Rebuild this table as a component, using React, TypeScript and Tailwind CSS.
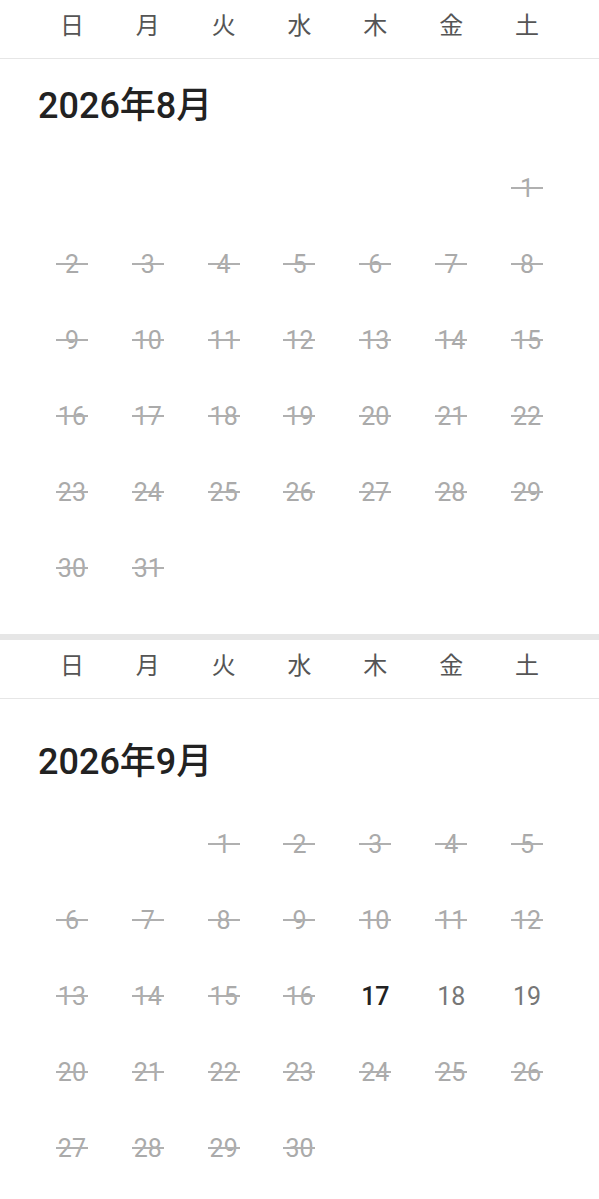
import React from "react";

const WEEK = ["日", "月", "火", "水", "木", "金", "土"];

type Day = { n: number; state: "past" | "today" | "open" };

const font = { fontFamily: 'Roboto, "Noto Sans CJK JP", sans-serif' };

const WeekHeader = () => (
  <div className="grid grid-cols-7 px-[34px] h-[59px] pb-[6px] items-center border-b border-[#e6e6e6]">
    {WEEK.map((w) => (
      <div key={w} className="text-center text-[24px] text-[#555] leading-none">
        {w}
      </div>
    ))}
  </div>
);

const DayCell = ({ day }: { day: Day | null }) => {
  if (!day) return <div className="h-[76px]" />;
  return (
    <div className="h-[76px] flex items-center justify-center">
      {day.state === "past" ? (
        <span className="relative text-[25px] leading-none text-[#aaa]">
          {day.n}
          <span className="absolute left-1/2 top-1/2 -translate-x-1/2 -translate-y-1/2 w-[32px] h-[2px] bg-[#b0b0b0]" />
        </span>
      ) : day.state === "today" ? (
        <span className="text-[25px] leading-none font-medium text-[#222]">{day.n}</span>
      ) : (
        <span className="text-[25px] leading-none text-[#777]">{day.n}</span>
      )}
    </div>
  );
};

const Month = ({
  title,
  offset,
  count,
  stateOf,
  top,
}: {
  title: string;
  offset: number;
  count: number;
  stateOf: (n: number) => Day["state"];
  top: string;
}) => {
  const cells: (Day | null)[] = [];
  for (let i = 0; i < offset; i++) cells.push(null);
  for (let n = 1; n <= count; n++) cells.push({ n, state: stateOf(n) });

  return (
    <section>
      <h2 className={`${top} pb-[22px] px-[38px] text-[36px] leading-[44px] font-medium text-[#222]`}>
        {title}
      </h2>
      <div className="grid grid-cols-7 px-[34px]">
        {cells.map((d, i) => (
          <DayCell key={i} day={d} />
        ))}
      </div>
    </section>
  );
};

export default function App() {
  return (
    <div className="w-[599px] h-[1199px] overflow-hidden bg-white" style={font}>
      <WeekHeader />
      <Month title="2026年8月" offset={6} count={31} stateOf={() => "past"} top="pt-[25px]" />
      <div className="h-[28px]" />
      <div className="h-[6px] bg-[#e6e6e6]" />
      <WeekHeader />
      <Month
        title="2026年9月"
        offset={2}
        count={30}
        stateOf={(n) => (n === 17 ? "today" : n === 18 || n === 19 ? "open" : "past")}
        top="pt-[41px]"
      />
    </div>
  );
}
